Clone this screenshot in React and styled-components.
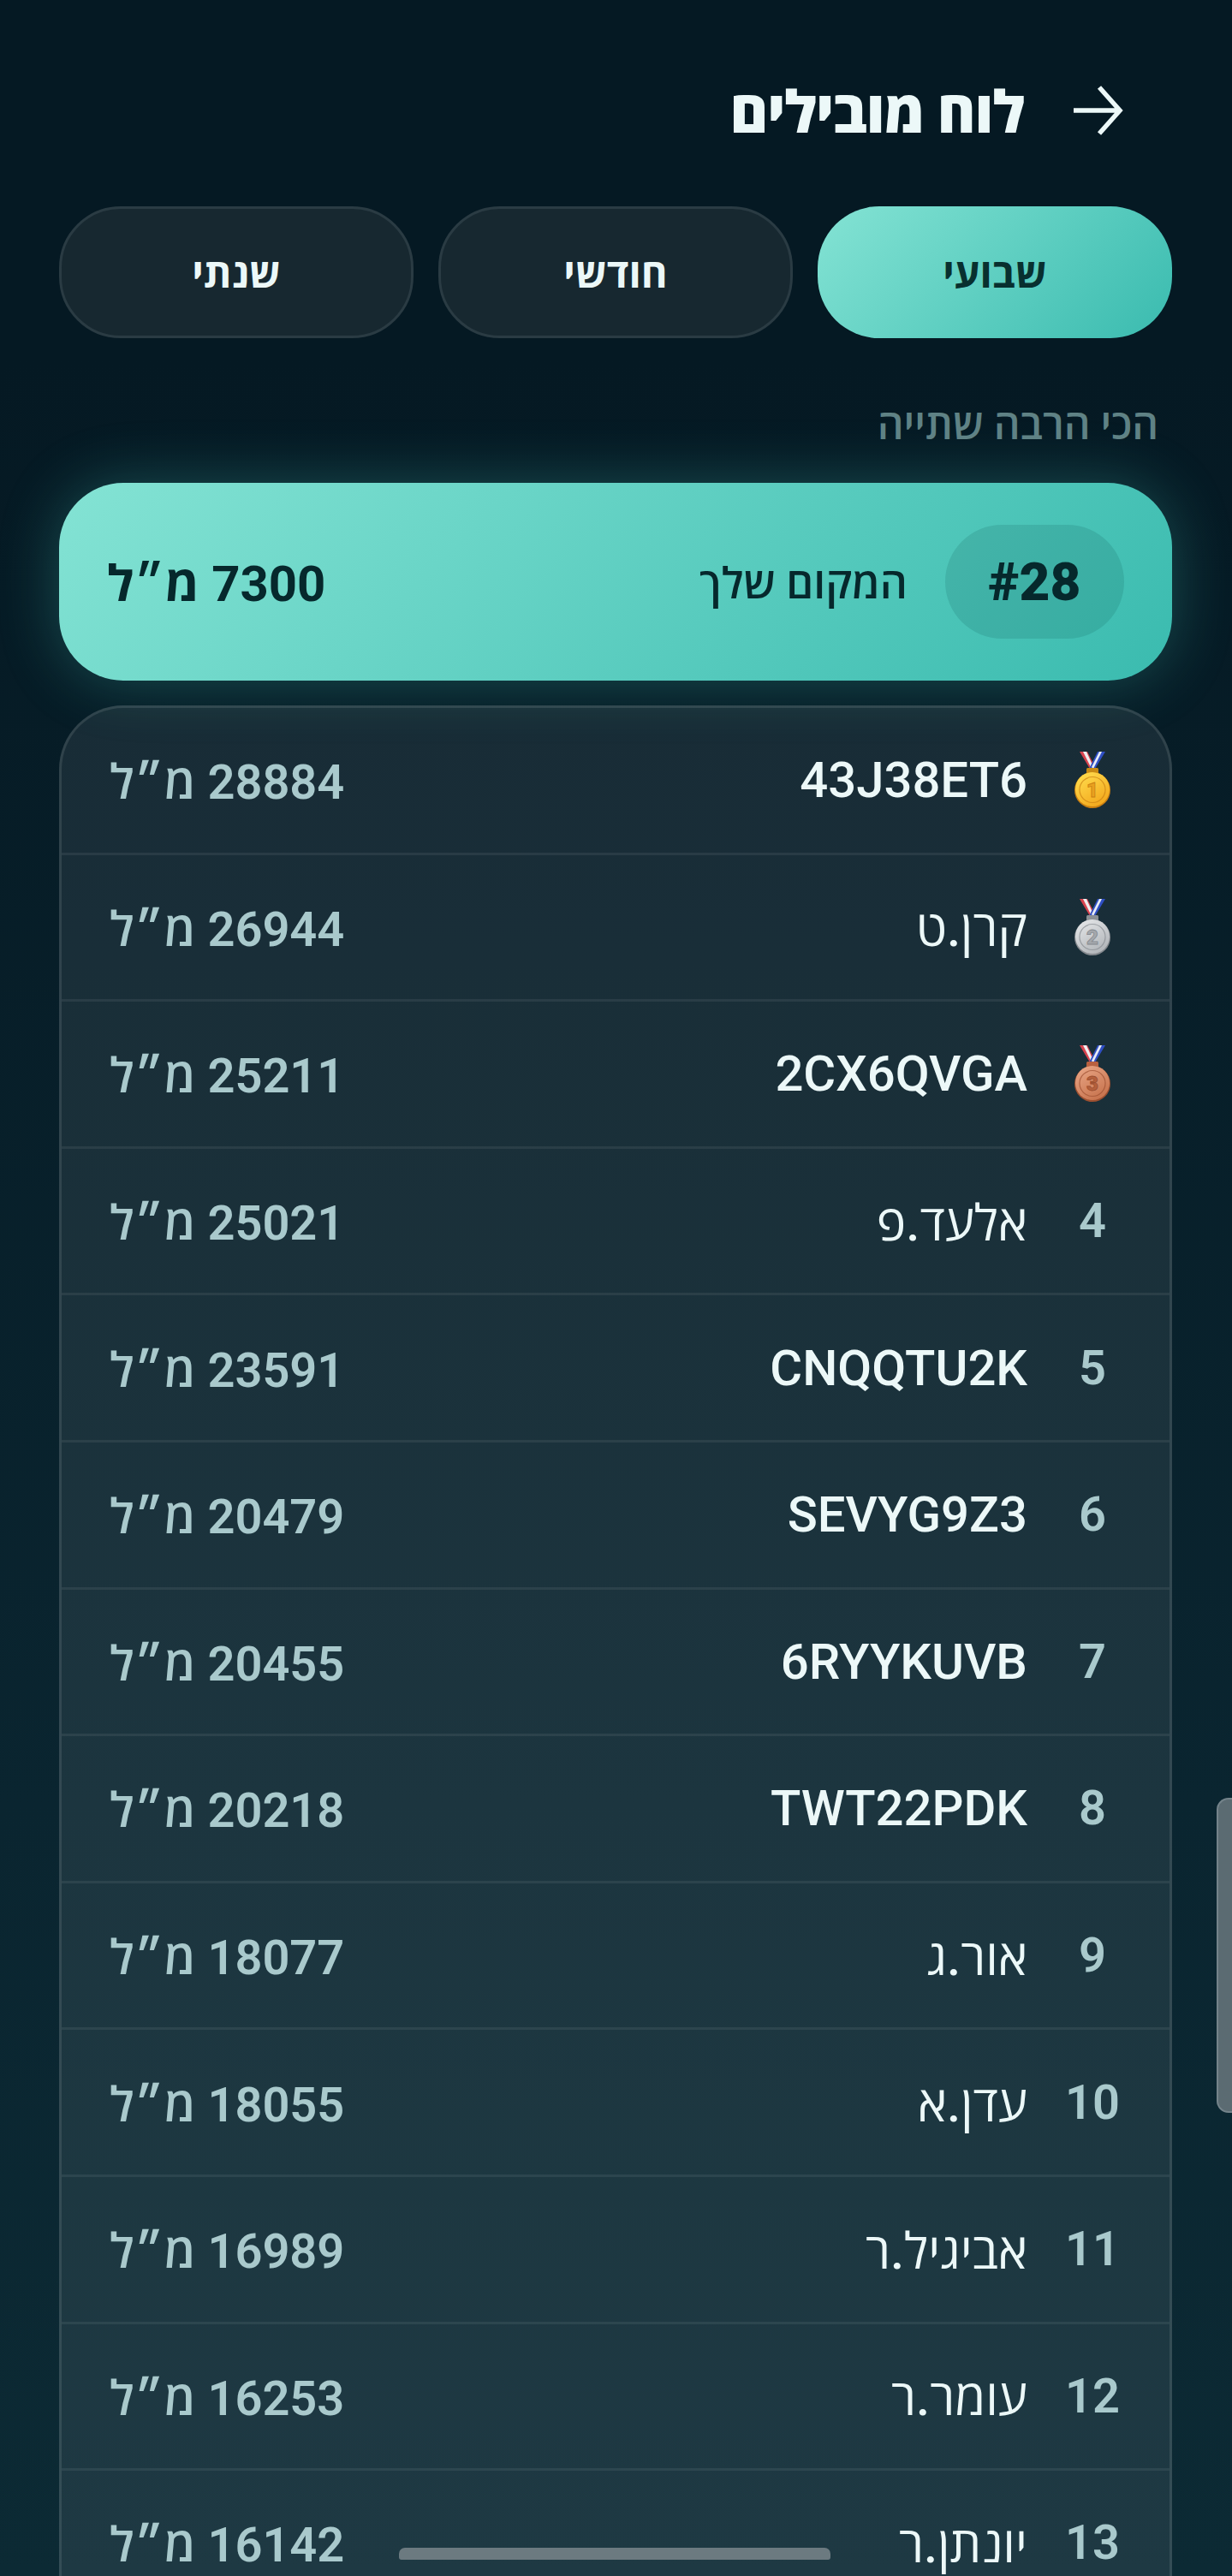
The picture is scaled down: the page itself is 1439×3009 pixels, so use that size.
import React from 'react';
import styled, { createGlobalStyle } from 'styled-components';

const Global = createGlobalStyle`
  html, body { margin: 0; padding: 0; background: #05171f; }
  * { box-sizing: border-box; }
`;

const Page = styled.div`
  position: relative;
  width: 1439px;
  height: 3009px;
  overflow: hidden;
  direction: rtl;
  padding: 0 70px 0 69px;
  background: linear-gradient(180deg, #051923 0%, #051923 14%, #0a2530 70%, #0c2a34 100%);
  font-family: Roboto, "Open Sans", "Liberation Sans", sans-serif;
  color: #ecf8f8;
`;

const Header = styled.header`
  height: 241px;
  padding: 92px 57px 0 0;
  display: flex;
  align-items: flex-start;
  gap: 56px;
`;

const BackIcon = styled.svg`
  width: 60px;
  height: 60px;
  margin-top: 8px;
  flex: none;
  transform: scaleX(-1) scaleX(-1);
`;

const Title = styled.h1`
  margin: 0;
  font-size: 68px;
  line-height: 80px;
  font-weight: 800;
  letter-spacing: -1px;
`;

const Tabs = styled.div`
  display: grid;
  grid-template-columns: repeat(3, 1fr);
  gap: 29px;
`;

const Tab = styled.button`
  height: 154px;
  border-radius: 72px;
  font: inherit;
  font-size: 47px;
  font-weight: 700;
  color: ${p => (p.$active ? '#08302f' : '#ecf8f8')};
  background: ${p => (p.$active ? 'linear-gradient(135deg, #84e3d4 0%, #3abbaf 100%)' : '#172830')};
  border: ${p => (p.$active ? 'none' : '3px solid #2a3b43')};
`;

const Subtitle = styled.h2`
  margin: 0;
  padding: 72px 16px 0 0;
  height: 169px;
  font-size: 48px;
  line-height: 60px;
  font-weight: 600;
  color: #5f8285;
`;

const You = styled.section`
  height: 231px;
  border-radius: 75px;
  padding: 0 56px;
  display: flex;
  align-items: center;
  gap: 44px;
  background: linear-gradient(135deg, #84e3d4 0%, #3abbaf 100%);
  box-shadow: 0 0 70px rgba(70, 200, 185, 0.3);
  color: #06282c;
`;

const YouBadge = styled.div`
  width: 209px;
  height: 133px;
  border-radius: 67px;
  background: rgba(8, 70, 70, 0.14);
  display: flex;
  align-items: center;
  justify-content: center;
  font-size: 62px;
  font-weight: 900;
  direction: ltr;
`;

const YouLabel = styled.div`
  font-size: 50px;
  font-weight: 600;
`;

const YouScore = styled.div`
  margin-right: auto;
  font-size: 58px;
  font-weight: 700;
`;

const List = styled.div`
  margin-top: 29px;
  border: 3px solid rgba(255, 255, 255, 0.1);
  border-bottom: none;
  border-radius: 75px 75px 0 0;
  background: rgba(255, 255, 255, 0.075);
`;

const Row = styled.div`
  height: 171.6px;
  display: flex;
  align-items: center;
  padding: 0 40px 0 56px;
  border-bottom: 3px solid rgba(255, 255, 255, 0.07);
`;

const Rank = styled.div`
  width: 100px;
  text-align: center;
  flex: none;
  font-size: 56px;
  font-weight: 600;
  color: #a9c9cc;
  display: flex;
  justify-content: center;
`;

const Name = styled.div`
  margin-right: 26px;
  font-size: 58px;
  font-weight: 500;
  color: #ecf8f8;
`;

const Score = styled.div`
  margin-right: auto;
  font-size: 56px;
  font-weight: 600;
  color: #a9c9cc;
`;

const ScrollThumb = styled.div`
  position: absolute;
  top: 2100px;
  right: 0;
  width: 18px;
  height: 368px;
  background: #5b6b72;
  border: 2px solid #74838a;
  border-right: none;
  border-radius: 14px 0 0 14px;
`;

const HomeBar = styled.div`
  position: absolute;
  left: 466px;
  top: 2976px;
  width: 504px;
  height: 14px;
  background: #6c7a80;
  border-radius: 7px 7px 3px 3px;
`;

const medalTones = {
  1: { a: '#ffdc4d', b: '#f2a51a', c: '#c97f12', d: '#c98a14', t: '#e9a01f' },
  2: { a: '#e4e6e8', b: '#aeb2b6', c: '#85898e', d: '#8b9095', t: '#a4a8ad' },
  3: { a: '#e8a484', b: '#c5704a', c: '#9c4f30', d: '#b8603f', t: '#b4603d' }
};

function Medal({ n }) {
  const c = medalTones[n];
  return (
    <svg width="44" height="68" viewBox="0 0 44 68" aria-hidden="true">
      <defs>
        <linearGradient id={`m${n}`} x1="0.2" y1="0" x2="0.8" y2="1">
          <stop offset="0" stopColor={c.a} />
          <stop offset="1" stopColor={c.b} />
        </linearGradient>
      </defs>
      <path d="M7 1h9l10 20h-7z" fill="#d8434f" />
      <path d="M11 1h4l9 20h-3z" fill="#f0eef0" />
      <path d="M37 1h-9l-10 20h7z" fill="#2f4fc4" />
      <path d="M33 1h-3l-9 18 2 2z" fill="#e8ecf5" />
      <rect x="15" y="20" width="14" height="7" rx="1.5" fill={c.d} />
      <circle cx="22" cy="46" r="21" fill={c.c} />
      <circle cx="22" cy="45" r="20" fill={`url(#m${n})`} />
      <circle cx="22" cy="45.5" r="15" fill="none" stroke={c.c} strokeWidth="1.2" opacity="0.7" />
      <text x="22" y="54" textAnchor="middle" fontFamily="Roboto, sans-serif" fontWeight="900" fontSize="24" fill={c.t} stroke={c.c} strokeWidth="0.8">{n}</text>
    </svg>
  );
}

const players = [
  ['43J38ET6', 28884], ['קרן.ט', 26944], ['2CX6QVGA', 25211], ['אלעד.פ', 25021],
  ['CNQQTU2K', 23591], ['SEVYG9Z3', 20479], ['6RYYKUVB', 20455], ['TWT22PDK', 20218],
  ['אור.ג', 18077], ['עדן.א', 18055], ['אביגיל.ר', 16989], ['עומר.ר', 16253], ['יונתן.ר', 16142]
];

export default function App() {
  return (
    <Page>
      <Global />
      <Header>
        <BackIcon viewBox="0 0 60 60" fill="none" stroke="#ecf8f8" strokeWidth="5.5">
          <path d="M2 29h52M32 2l24 27-24 27" />
        </BackIcon>
        <Title>לוח מובילים</Title>
      </Header>
      <Tabs>
        <Tab $active>שבועי</Tab>
        <Tab>חודשי</Tab>
        <Tab>שנתי</Tab>
      </Tabs>
      <Subtitle>הכי הרבה שתייה</Subtitle>
      <You>
        <YouBadge>#28</YouBadge>
        <YouLabel>המקום שלך</YouLabel>
        <YouScore>7300 מ״ל</YouScore>
      </You>
      <List>
        {players.map(([name, score], i) => (
          <Row key={name}>
            <Rank>{i < 3 ? <Medal n={i + 1} /> : i + 1}</Rank>
            <Name>{name}</Name>
            <Score>{score} מ״ל</Score>
          </Row>
        ))}
      </List>
      <ScrollThumb />
      <HomeBar />
    </Page>
  );
}
